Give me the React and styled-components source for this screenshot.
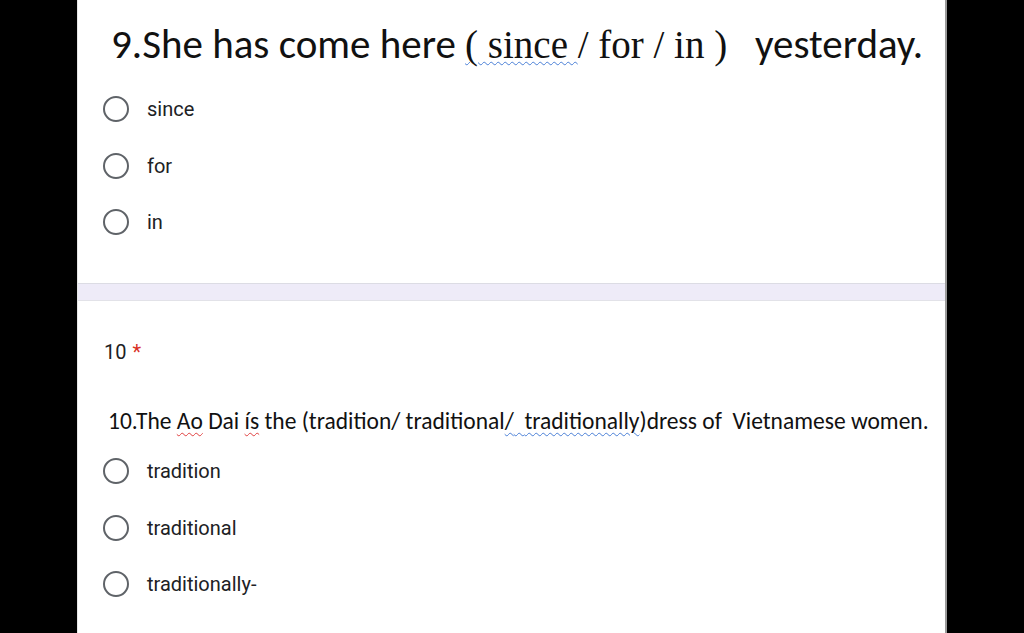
import React from 'react';
import styled, { createGlobalStyle } from 'styled-components';

const GlobalStyle = createGlobalStyle`
  html, body {
    margin: 0;
    padding: 0;
    background: #000;
  }
  body {
    font-family: Roboto, "Liberation Sans", sans-serif;
  }
`;

const Screen = styled.div`
  width: 1024px;
  height: 633px;
  overflow: hidden;
  background: #000;
  display: flex;
  justify-content: center;
`;

const Panel = styled.div`
  width: 870px;
  height: 633px;
  background: #fff;
  border-left: 1px solid #e6e6e6;
  border-right: 2px solid #9a9a9a;
  box-sizing: border-box;
  display: flex;
  flex-direction: column;
`;

const Card = styled.section`
  display: flex;
  flex-direction: column;
  height: ${(p) => p.height}px;
  box-sizing: border-box;
  padding-top: ${(p) => p.top}px;
`;

const Divider = styled.div`
  height: 18px;
  flex-shrink: 0;
  background: #eeebf8;
  border-top: 1px solid #dcdce4;
  border-bottom: 1px solid #e2e2e8;
  box-sizing: border-box;
`;

const BigPrompt = styled.h2`
  margin: 0 0 0 33px;
  font-family: Carlito, "Liberation Sans", sans-serif;
  font-weight: normal;
  font-size: 41px;
  line-height: 44px;
  color: #111;
  white-space: nowrap;
`;

const Serif = styled.span`
  font-family: "Liberation Serif", serif;
  font-size: 39px;
`;

const Squiggle = styled.span`
  text-decoration: underline wavy ${(p) => p.color};
  text-decoration-thickness: 1px;
  text-underline-offset: 3px;
`;

const QuestionTitle = styled.div`
  margin: 0 0 0 26px;
  font-family: Roboto, sans-serif;
  font-size: 20px;
  line-height: 24px;
  color: #202124;
`;

const Star = styled.span`
  color: #d93025;
  margin-left: 6px;
`;

const SmallPrompt = styled.div`
  margin: ${(p) => p.top}px 0 0 30px;
  font-family: Carlito, "Liberation Sans", sans-serif;
  font-size: 23.5px;
  line-height: 26px;
  color: #111;
  white-space: nowrap;
`;

const Options = styled.div`
  display: flex;
  flex-direction: column;
  padding-left: 25px;
  margin-top: ${(p) => p.gap}px;
`;

const Option = styled.label`
  display: flex;
  align-items: center;
  height: 56.5px;
  gap: 18px;
`;

const Radio = styled.span`
  width: 26px;
  height: 26px;
  border: 2.5px solid #5f6368;
  border-radius: 50%;
  box-sizing: border-box;
  flex-shrink: 0;
`;

const OptionText = styled.span`
  font-family: Roboto, sans-serif;
  font-size: 20px;
  color: #202124;
`;

const OptionList = ({ items, gap }) => (
  <Options gap={gap}>
    {items.map((item) => (
      <Option key={item}>
        <Radio />
        <OptionText>{item}</OptionText>
      </Option>
    ))}
  </Options>
);

const App = () => (
  <>
    <GlobalStyle />
    <Screen>
      <Panel>
        <Card height={283} top={22}>
          <BigPrompt>
            9.She has come here{' '}
            <Serif>
              <Squiggle color="#4a7fd6">( since </Squiggle>/ for / in )
            </Serif>
            {'\u00a0\u00a0 '}yesterday.
          </BigPrompt>
          <OptionList items={['since', 'for', 'in']} gap={14} />
        </Card>
        <Divider />
        <Card height={332} top={39}>
          <QuestionTitle>
            10<Star>*</Star>
          </QuestionTitle>
          <SmallPrompt top={44}>
            10.The <Squiggle color="#e04040">Ao</Squiggle> Dai{' '}
            <Squiggle color="#e04040">ís</Squiggle> the (tradition/ traditional
            <Squiggle color="#4a7fd6">/{'\u00a0 '}traditionally</Squiggle>)dress of{'\u00a0 '}
            Vietnamese women.
          </SmallPrompt>
          <OptionList items={['tradition', 'traditional', 'traditionally-']} gap={9} />
        </Card>
      </Panel>
    </Screen>
  </>
);

export default App;
